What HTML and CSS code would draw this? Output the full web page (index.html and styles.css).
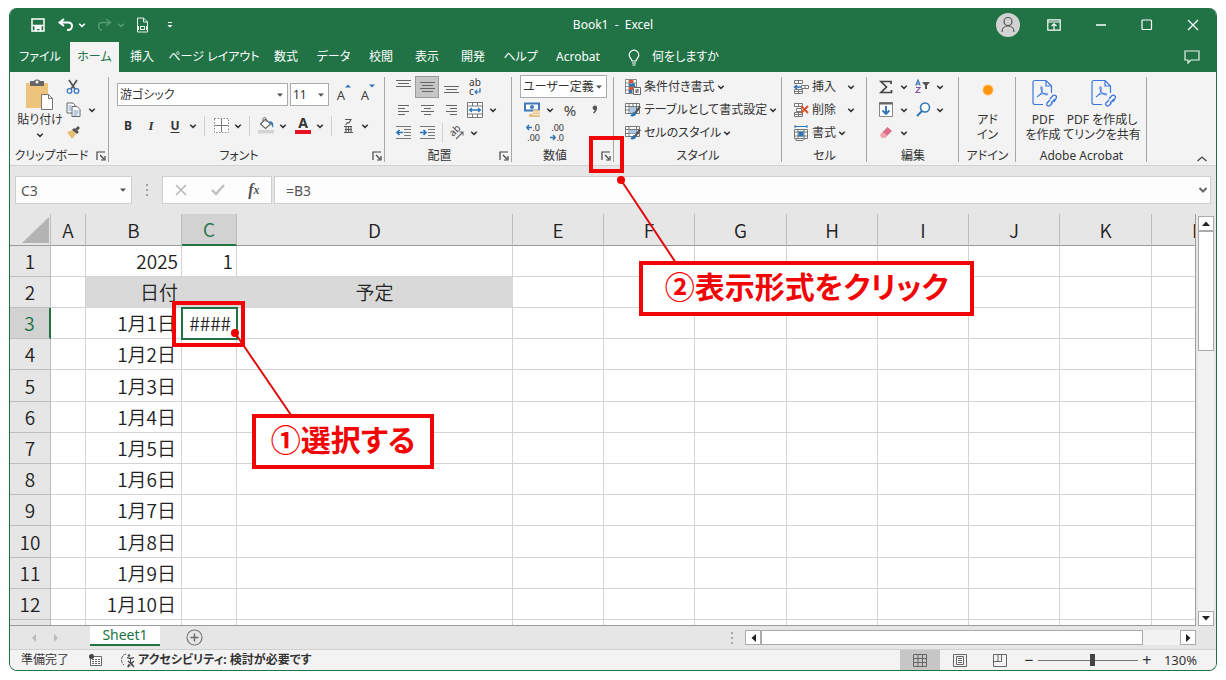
FILE: index.html
```html
<!DOCTYPE html>
<html lang="ja">
<head>
<meta charset="utf-8">
<title>Book1 - Excel</title>
<link rel="stylesheet" href="styles.css">
</head>
<body>
<svg class="defs" width="0" height="0" aria-hidden="true">
  <symbol id="chev" viewBox="0 0 12 12"><path d="M3.2 4.8 6 7.4 8.8 4.8" fill="none" stroke="currentColor" stroke-width="1.5"/></symbol>
  <symbol id="caret" viewBox="0 0 12 12"><path d="M3 4.5h6L6 7.7z" fill="currentColor"/></symbol>
  <symbol id="launch" viewBox="0 0 12 12"><path d="M2 10V2h8M5 5l4 4M10 6v4H6" fill="none" stroke="#444" stroke-width="1.2"/></symbol>
</svg>

<main class="window">
  <header class="titlebar">
    <div class="quick">
      <button class="tb" aria-label="上書き保存"><svg width="14" height="14" viewBox="0 0 14 14"><path d="M1 1h12v12H1z" fill="none" stroke="#fff" stroke-width="1.500"/><path d="M1 7.500h12" stroke="#fff" stroke-width="1.500"/><path d="M3.500 8h7v5.500h-2V11H6v2.500H3.500z" fill="#fff"/></svg></button>
      <button class="tb undo" aria-label="元に戻す"><svg width="16" height="14" viewBox="0 0 16 14"><path d="M6 1 1.500 4.500 6 8M2 4.500h8c3 0 4 1.500 4 3.500s-1.500 4-4 4H9" fill="none" stroke="#fff" stroke-width="2"/></svg><svg class="chev"><use href="#chev"/></svg></button>
      <button class="tb redo" aria-label="やり直し" disabled><svg width="16" height="14" viewBox="0 0 16 14"><path d="M9 1l4.500 3.500L9 8M13 4.500H6c-3 0-4.500 1.500-4.500 3.500S3 12 5 12" fill="none" stroke="#549a70" stroke-width="1.500"/></svg><svg class="chev"><use href="#chev"/></svg></button>
      <button class="tb" aria-label="印刷プレビュー"><svg width="13" height="16" viewBox="0 0 13 16"><path d="M1.500 9V1h6l4 4v4M7.500 1v4h4M1.500 13v2h10v-2" fill="none" stroke="#e4f0e8"/><path d="M1 9h2v4H1zM10 9h2v4h-2z" fill="#e4f0e8"/><rect x="4.500" y="9.500" width="4" height="3" fill="none" stroke="#e4f0e8"/></svg></button>
      <button class="tb more" aria-label="クイック アクセスのカスタマイズ"><svg width="8" height="8" viewBox="0 0 8 8"><path d="M2 1.500h4" stroke="#fff"/><path d="M1.500 4h5L4 6.500z" fill="#fff"/></svg></button>
    </div>
    <h1 class="title">Book1&nbsp; -&nbsp; Excel</h1>
    <div class="sys">
      <button class="avatar" aria-label="アカウント"><svg width="24" height="24" viewBox="0 0 24 24"><circle cx="12" cy="12" r="12" fill="#d2d2d2"/><circle cx="12" cy="8.500" r="4" fill="none" stroke="#555" stroke-width="1.200"/><path d="M6 19c0-8 12-8 12 0" fill="none" stroke="#555" stroke-width="1.200"/></svg></button>
      <button class="tb" aria-label="リボンの表示オプション"><svg width="14" height="12" viewBox="0 0 14 12"><path d="M.8.8h12.400v10.400H.8zM1 3h12M7 11V5M4.500 7 7 4.800 9.500 7" fill="none" stroke="#fff" stroke-width="1.200"/></svg></button>
      <button class="tb" aria-label="最小化"><svg width="12" height="12" viewBox="0 0 12 12"><path d="M1 6h10" stroke="#fff" stroke-width="1.300"/></svg></button>
      <button class="tb" aria-label="最大化"><svg width="12" height="12" viewBox="0 0 12 12"><rect x="1" y="1" width="9.500" height="9.500" rx="1" fill="none" stroke="#fff" stroke-width="1.200"/></svg></button>
      <button class="tb" aria-label="閉じる"><svg width="12" height="12" viewBox="0 0 12 12"><path d="m1 1 10 10M11 1 1 11" stroke="#fff" stroke-width="1.300"/></svg></button>
    </div>
  </header>

  <nav class="tabs">
    <button class="tab t-file">ファイル</button>
    <button class="tab t-home">ホーム</button>
    <button class="tab">挿入</button>
    <button class="tab t-page">ページ レイアウト</button>
    <button class="tab">数式</button>
    <button class="tab t-home">データ</button>
    <button class="tab">校閲</button>
    <button class="tab">表示</button>
    <button class="tab">開発</button>
    <button class="tab t-home">ヘルプ</button>
    <button class="tab t-acro">Acrobat</button>
    <button class="tell"><svg width="12" height="17" viewBox="0 0 12 17"><path d="M4 12c0-2-2.800-3-2.800-6a4.800 4.800 0 0 1 9.600 0c0 3-2.800 4-2.800 6zM4 14h4M4.500 16h3" fill="none" stroke="#fff" stroke-width="1.200"/></svg>何をしますか</button>
    <button class="comment" aria-label="コメント"><svg width="16" height="14" viewBox="0 0 16 14"><path d="M1 1h14v9H7l-3 3v-3H1z" fill="none" stroke="#e8f3ec" stroke-width="1.200"/></svg></button>
  </nav>

  <section class="ribbon" aria-label="ホーム">
    <div class="group g-clip">
      <div class="body clip">
        <button class="paste"><svg width="30" height="32" viewBox="0 0 30 32"><path d="M1 4h22v25H1z" fill="#ecc47c"/><path d="M5 2h4c1-2 5-2 6 0h4v5H5z" fill="#666"/><circle cx="12" cy="3" r="1.500" fill="#f3f3f3"/><path d="M16.500 15.500h7l4 4v11h-11z" fill="#fff" stroke="#777"/><path d="M23.500 15.500v4h4" fill="none" stroke="#777"/></svg><span>貼り付け</span><svg class="chev"><use href="#chev"/></svg></button>
        <div class="col">
          <button class="ic" aria-label="切り取り"><svg width="14" height="15" viewBox="0 0 14 15"><path d="m3 1 6 9M11 1l-6 9" stroke="#555" stroke-width="1.700"/><circle cx="3.500" cy="12" r="2.300" fill="none" stroke="#3f78c4" stroke-width="1.300"/><circle cx="10.500" cy="12" r="2.300" fill="none" stroke="#3f78c4" stroke-width="1.300"/></svg></button>
          <div class="line"><button class="ic" aria-label="コピー"><svg width="15" height="15" viewBox="0 0 15 15"><path d="M1 1h6l2 2v8H1z" fill="#fff" stroke="#666"/><path d="M6 4.500h5l3 3v7H6z" fill="#fff" stroke="#666"/><path d="M2.500 4h3M2.500 6h3M2.500 8h3M7.500 9h5M7.500 11h5M7.500 13h4" stroke="#5b8fd0" stroke-width=".9"/></svg></button><button class="dd dd-wide" aria-label="コピーのオプション"><svg class="chev"><use href="#chev"/></svg></button></div>
          <button class="ic" aria-label="書式のコピー"><svg width="15" height="14" viewBox="0 0 15 14"><path d="m1 6 5-2 4 4-4 5z" fill="#e9bd70"/><path d="m6 4 2-2 5 4-2 2zM9 3l3-3 2 2-3 3z" fill="#555"/></svg></button>
        </div>
      </div>
      <footer class="cap"><span>クリップボード</span><button class="launch" aria-label="クリップボードの詳細"><svg class="chev"><use href="#launch"/></svg></button></footer>
    </div>

    <div class="group g-font">
      <div class="body font">
        <div class="line fontrow">
          <label class="combo c-name"><select aria-label="フォント名"><option>游ゴシック</option></select><svg class="chev"><use href="#caret"/></svg></label>
          <label class="combo c-size"><select aria-label="フォント サイズ"><option>11</option></select><svg class="chev"><use href="#caret"/></svg></label>
          <button class="ic grow" aria-label="フォント サイズの拡大"><span>A</span><svg width="6" height="4" viewBox="0 0 6 4"><path d="M0 3.500 3 .5l3 3z" fill="#2e75b6"/></svg></button>
          <button class="ic grow" aria-label="フォント サイズの縮小"><span>A</span><svg width="6" height="4" viewBox="0 0 6 4"><path d="M0 .5h6l-3 3z" fill="#2e75b6"/></svg></button>
        </div>
        <div class="line">
          <button class="ic bold">B</button><button class="ic ital">I</button><button class="ic under">U</button><button class="dd" aria-label="下線の種類"><svg class="chev"><use href="#chev"/></svg></button>
          <i class="sep"></i>
          <button class="ic" aria-label="罫線"><svg width="15" height="15" viewBox="0 0 15 15"><path d="M.5.500h14v14H.5z" fill="#fff" stroke="#888" stroke-dasharray="1.500 1.500"/><path d="M7.500 1v13M1 7.500h13" stroke="#777"/></svg></button><button class="dd" aria-label="罫線の種類"><svg class="chev"><use href="#chev"/></svg></button>
          <i class="sep"></i>
          <button class="ic" aria-label="塗りつぶしの色"><svg width="17" height="17" viewBox="0 0 17 17"><path d="m2.500 7 5-5 5 5-5 4.500z" fill="#fff" stroke="#666" stroke-width="1.200"/><path d="M5 5V2c0-2 3-2 3 0v3" fill="none" stroke="#666"/><path d="M11 4c4 0 5 3 4 7l-2-4z" fill="#2e75b6"/><path d="M0 13h16v3.500H0z" fill="#d4d4d4"/></svg></button><button class="dd" aria-label="塗りつぶしの色の選択"><svg class="chev"><use href="#chev"/></svg></button>
          <button class="ic color" aria-label="フォントの色"><span>A</span></button><button class="dd" aria-label="フォントの色の選択"><svg class="chev"><use href="#chev"/></svg></button>
          <i class="sep"></i>
          <button class="ic" aria-label="ふりがな"><svg width="10" height="16" viewBox="0 0 10 16"><path d="M2 1.500h6L6 5H4M5 4 2.500 7M1 8.500h8M1 14.500h9M2 11.500h7M3 8v6M5.500 8v6M8 8v6" fill="none" stroke="#555" stroke-width="1.100"/></svg></button><button class="dd" aria-label="ふりがなのオプション"><svg class="chev"><use href="#chev"/></svg></button>
        </div>
      </div>
      <footer class="cap"><span>フォント</span><button class="launch" aria-label="フォントの詳細"><svg class="chev"><use href="#launch"/></svg></button></footer>
    </div>

    <div class="group g-align">
      <div class="body">
        <div class="line">
          <button class="ic w24" aria-label="上揃え"><svg width="15" height="16" viewBox="0 0 15 16"><path d="M0 1.500h15M2 4.500h11M0 7.500h15" stroke="#666"/></svg></button>
          <button class="ic w24 on" aria-label="上下中央揃え"><svg width="15" height="16" viewBox="0 0 15 16"><path d="M0 3.500h15M2 6.500h11M0 9.500h15M2 12.500h11" stroke="#666"/></svg></button>
          <button class="ic w24" aria-label="下揃え"><svg width="15" height="16" viewBox="0 0 15 16"><path d="M0 7.500h15M2 10.500h11M0 13.500h15" stroke="#666"/></svg></button>
          <button class="ic w24 wrap" aria-label="折り返して全体を表示する"><span>ab</span><span>c<svg width="7" height="7" viewBox="0 0 7 7"><path d="M6 0v4H1M3 2 1 4l2 2" fill="none" stroke="#2e75b6" stroke-width="1.200"/></svg></span></button>
        </div>
        <div class="line">
          <button class="ic w24" aria-label="左揃え"><svg width="13" height="13" viewBox="0 0 13 13"><path d="M1 2.500h11M1 5.500h7M1 8.500h11M1 11.500h7" stroke="#666"/></svg></button>
          <button class="ic w24" aria-label="中央揃え"><svg width="13" height="13" viewBox="0 0 13 13"><path d="M0 2.500h13M3 5.500h7M0 8.500h13M3 11.500h7" stroke="#666"/></svg></button>
          <button class="ic w24" aria-label="右揃え"><svg width="13" height="13" viewBox="0 0 13 13"><path d="M1 2.500h11M5 5.500h7M1 8.500h11M5 11.500h7" stroke="#666"/></svg></button>
          <button class="ic w24" aria-label="セルを結合して中央揃え"><svg width="16" height="16" viewBox="0 0 16 16"><path d="M.5.500h15v15H.5zM.5 4h15M.5 12h15M5.500.500V4M10.500.500V4M5.500 12v3.500M10.500 12v3.500" fill="#fff" stroke="#777"/><path d="M2.500 8h11M5 6 2.500 8 5 10M11 6l2.500 2L11 10" fill="none" stroke="#2e75b6" stroke-width="1.300"/></svg></button><button class="dd" aria-label="結合のオプション"><svg class="chev"><use href="#chev"/></svg></button>
        </div>
        <div class="line">
          <button class="ic w24" aria-label="インデントを減らす"><svg width="15" height="13" viewBox="0 0 15 13"><path d="M0 .5h15M8 3.500h7M8 6.500h7M8 9.500h7M0 12.500h15" stroke="#777"/><path d="M7 6.500H1M3.500 4 1 6.500 3.500 9" fill="none" stroke="#2e75b6" stroke-width="1.700"/></svg></button>
          <button class="ic w24" aria-label="インデントを増やす"><svg width="15" height="13" viewBox="0 0 15 13"><path d="M0 .5h15M8 3.500h7M8 6.500h7M8 9.500h7M0 12.500h15" stroke="#777"/><path d="M0 6.500h6M3.500 4 6 6.500 3.500 9" fill="none" stroke="#2e75b6" stroke-width="1.700"/></svg></button>
          <i class="sep tight"></i>
          <button class="ic" aria-label="方向"><svg width="16" height="15" viewBox="0 0 16 15"><text class="abtext" transform="translate(4 12) rotate(-45)">ab</text><path d="m7 14 7-7M10.500 7H14v3.500" fill="none" stroke="#666" stroke-width="1.100"/></svg></button><button class="dd" aria-label="方向のオプション"><svg class="chev"><use href="#chev"/></svg></button>
        </div>
      </div>
      <footer class="cap"><span>配置</span><button class="launch" aria-label="配置の詳細"><svg class="chev"><use href="#launch"/></svg></button></footer>
    </div>

    <div class="group g-num">
      <div class="body">
        <label class="combo c-fmt"><select aria-label="数値の書式"><option>ユーザー定義</option></select><svg class="chev"><use href="#caret"/></svg></label>
        <div class="line">
          <button class="ic w24" aria-label="通貨表示形式"><svg width="17" height="16" viewBox="0 0 17 16"><path d="M1 1.500h14v7H1z" fill="#fff" stroke="#3d79b8" stroke-width="2"/><circle cx="8" cy="5" r="2" fill="#3d79b8"/><path d="M9 8h7v7H9zM5 12h5v3H5z" fill="#eac184"/><path d="M9 10h7M9 12.500h7" stroke="#fff" stroke-width=".8"/></svg></button><button class="dd" aria-label="通貨の選択"><svg class="chev"><use href="#chev"/></svg></button>
          <button class="ic pct" aria-label="パーセント スタイル">%</button>
          <button class="ic" aria-label="桁区切りスタイル"><svg width="6" height="9" viewBox="0 0 6 9"><path d="M3 .5c3 0 3 5-1 8l-1-.7C2 7 3 5.500 2.500 5 0 5 0 .5 3 .5z" fill="#555"/></svg></button>
        </div>
        <div class="line">
          <button class="ic w24 dec" aria-label="小数点以下の表示桁数を増やす"><span><svg width="6" height="7" viewBox="0 0 6 7"><path d="M6 3.500H1M3 1 .8 3.500 3 6" fill="none" stroke="#2e75b6" stroke-width="1.500"/></svg>.0</span><span>.00</span></button>
          <button class="ic w24 dec" aria-label="小数点以下の表示桁数を減らす"><span>.00</span><span><svg width="6" height="7" viewBox="0 0 6 7"><path d="M0 3.500h5M3 1l2.200 2.500L3 6" fill="none" stroke="#2e75b6" stroke-width="1.500"/></svg>.0</span></button>
        </div>
      </div>
      <footer class="cap"><span>数値</span><button class="launch" aria-label="表示形式"><svg class="chev"><use href="#launch"/></svg></button></footer>
    </div>

    <div class="group g-style">
      <div class="body">
        <button class="cmd"><svg width="16" height="16" viewBox="0 0 16 16"><path d="M.5.500h11v14H.5zM.5 4h11M.5 7.500h11M.5 11h11M4 .5v14M8 .5v14" fill="#fff" stroke="#888"/><path d="M4 1h4v3H4zM4 8h4v3H4z" fill="#d9532c"/><path d="M4 4.500h6v3H4zM4 11h3v3H4z" fill="#2e75b6"/><path d="M8.500 8.500h7v7h-7z" fill="#fff" stroke="#666"/><path d="M10 11h4M10 13h4M13 10l-2 4" stroke="#444" stroke-width=".8"/></svg>条件付き書式<svg class="chev"><use href="#chev"/></svg></button>
        <button class="cmd"><svg width="16" height="15" viewBox="0 0 16 15"><path d="M.5 1.500h14v10H.5zM.5 4.500h14M.5 8h14M4 1.500v10M8 1.500v10M11.500 1.500v10" fill="#fff" stroke="#777"/><path d="M5 5h6v6H5z" fill="#a9c8e8"/><path d="m14 4 2 1-5 7-2-1z" fill="#555"/><path d="M9 10c-3 1-2 3-4 4 3 1 6 0 6-2z" fill="#2e75b6"/></svg>テーブルとして書式設定<svg class="chev"><use href="#chev"/></svg></button>
        <button class="cmd"><svg width="16" height="15" viewBox="0 0 16 15"><path d="M.5 1.500h14v10H.5zM.5 4.500h14M.5 8.500h14M4 1.500v10M11.500 1.500v10" fill="#fff" stroke="#777"/><path d="M4.500 5h7v3.500h-7z" fill="#a9c8e8"/><path d="m14 4 2 1-5 7-2-1z" fill="#555"/><path d="M9 10c-3 1-2 3-4 4 3 1 6 0 6-2z" fill="#2e75b6"/></svg>セルのスタイル<svg class="chev"><use href="#chev"/></svg></button>
      </div>
      <footer class="cap"><span>スタイル</span></footer>
    </div>

    <div class="group g-cell">
      <div class="body">
        <button class="cmd"><svg width="16" height="16" viewBox="0 0 16 16"><path d="M1.500 1.500h8v3h-8zM5.500 1.500v3M1.500 10.500h8v4h-8zM5.500 10.500v4M1.500 12.500h8M8.500 6.500h7v3h-7zM12 6.500v3" fill="#fff" stroke="#777"/><path d="M8 8H1.500M4 6 1.500 8 4 10" fill="none" stroke="#2e75b6" stroke-width="1.400"/></svg>挿入<svg class="chev push"><use href="#chev"/></svg></button>
        <button class="cmd"><svg width="16" height="16" viewBox="0 0 16 16"><path d="M1.500 1.500h8v3h-8zM5.500 1.500v3M3.500 6.500h5v3h-5zM1.500 10.500h8v4h-8zM5.500 10.500v4M1.500 12.500h8" fill="#fff" stroke="#777"/><path d="m8 4 7 7M15 4l-7 7" stroke="#d8502c" stroke-width="1.900"/></svg>削除<svg class="chev push"><use href="#chev"/></svg></button>
        <button class="cmd"><svg width="16" height="16" viewBox="0 0 16 16"><path d="M1.500 4.500h13v9h-13zM1.500 7h13M1.500 11h13M5 4.500v9M11 4.500v9" fill="#fff" stroke="#777"/><path d="M5.500 6.500h5v5h-5z" fill="#2e75b6"/><path d="M2 1.500h12M2 0v3M14 0v3" stroke="#2e75b6"/><path d="M3 13.500v2h7l2-2" fill="none" stroke="#777"/></svg>書式<svg class="chev"><use href="#chev"/></svg></button>
      </div>
      <footer class="cap"><span>セル</span></footer>
    </div>

    <div class="group g-edit">
      <div class="body">
        <div class="line"><button class="ic" aria-label="合計"><svg width="14" height="14" viewBox="0 0 14 14"><path d="M12 4V1.500H2L7.500 7 2 12.500h10.500V10" fill="none" stroke="#444" stroke-width="1.700"/></svg></button><button class="dd dd-mid" aria-label="合計のオプション"><svg class="chev"><use href="#chev"/></svg></button>
          <button class="ic sort" aria-label="並べ替えとフィルター"><svg width="16" height="15" viewBox="0 0 16 15"><path d="M.8 6.500 3 1l2.200 5.500M1.500 5h3" fill="none" stroke="#2e75b6" stroke-width="1.200"/><path d="M1 8.500h4l-4 5h4.500" fill="none" stroke="#8a4ba8" stroke-width="1.200"/><path d="M7 3h8l-3 3.500V10h-2V6.500z" fill="#555"/></svg></button><button class="dd" aria-label="並べ替えのオプション"><svg class="chev"><use href="#chev"/></svg></button></div>
        <div class="line"><button class="ic" aria-label="フィル"><svg width="14" height="15" viewBox="0 0 14 15"><path d="M.5.500h13v14H.5z" fill="#fff" stroke="#888"/><path d="M0 1.500h14" stroke="#666" stroke-width="2"/><path d="M7 4v8M3.500 8.500 7 12l3.500-3.500" fill="none" stroke="#2e75b6" stroke-width="1.900"/></svg></button><button class="dd dd-mid" aria-label="フィルのオプション"><svg class="chev"><use href="#chev"/></svg></button>
          <button class="ic sort" aria-label="検索と選択"><svg width="15" height="15" viewBox="0 0 15 15"><circle cx="9" cy="5.500" r="4.500" fill="#fff" stroke="#2e75b6" stroke-width="1.500"/><path d="m6 9-5 5" stroke="#2e75b6" stroke-width="2"/></svg></button><button class="dd" aria-label="検索のオプション"><svg class="chev"><use href="#chev"/></svg></button></div>
        <div class="line"><button class="ic" aria-label="クリア"><svg width="14" height="13" viewBox="0 0 14 13"><path d="m8.500 1 4.500 4-5 5-4.500-4z" fill="#dd7084"/><path d="M3.500 6 8 10l-2 2H3L.8 9z" fill="#f0a0ae"/></svg></button><button class="dd dd-mid" aria-label="クリアのオプション"><svg class="chev"><use href="#chev"/></svg></button></div>
      </div>
      <footer class="cap"><span>編集</span></footer>
    </div>

    <div class="group g-add">
      <div class="body"><button class="big"><svg width="28" height="32" viewBox="0 0 28 32"><circle cx="14" cy="14" r="6" fill="#ffdcae"/><circle cx="14" cy="14" r="4.800" fill="#fd960c"/></svg><span>アド<br>イン</span></button></div>
      <footer class="cap"><span>アドイン</span></footer>
    </div>

    <div class="group g-acro">
      <div class="body two">
        <button class="big b-one"><svg width="28" height="32" viewBox="0 0 28 32"><path d="M14 28.500H6c-1.500 0-2-1-2-2v-20c0-1 .5-2 2-2h11l5.500 5.500v7M17 4.500V10h5.500" fill="none" stroke="#3b76e0" stroke-width="1.200"/><path d="M8 21c4-2 6-7 5-10-1-1-1.500 0-1 2 1 3 3 6 6 6 2-1 0-2-3-1.500S9 19 8 21" fill="none" stroke="#3b76e0"/><path d="m21 24-3 3c-1.500 2 1 4 3 2.500l2.500-2.500M22 27l4-4M21 23l2.500-3c2-2 5 0 3.500 2.500L25 26" fill="none" stroke="#3b76e0" stroke-width="1.300"/></svg><span>PDF<br>を作成</span></button>
        <button class="big b-two"><svg width="28" height="32" viewBox="0 0 28 32"><path d="M14 28.500H6c-1.500 0-2-1-2-2v-20c0-1 .5-2 2-2h11l5.500 5.500v7M17 4.500V10h5.500" fill="none" stroke="#3b76e0" stroke-width="1.200"/><path d="M8 21c4-2 6-7 5-10-1-1-1.500 0-1 2 1 3 3 6 6 6 2-1 0-2-3-1.500S9 19 8 21" fill="none" stroke="#3b76e0"/><path d="m21 24-3 3c-1.500 2 1 4 3 2.500l2.500-2.500M22 27l4-4M21 23l2.500-3c2-2 5 0 3.500 2.500L25 26" fill="none" stroke="#3b76e0" stroke-width="1.300"/></svg><span>PDF を作成し<br>てリンクを共有</span></button>
      </div>
      <footer class="cap"><span>Adobe Acrobat</span></footer>
    </div>
    <button class="collapse" aria-label="リボンを折りたたむ"><svg width="12" height="8" viewBox="0 0 12 8"><path d="M1.500 6 6 2l4.500 4" fill="none" stroke="#444" stroke-width="1.300"/></svg></button>
  </section>

  <section class="formula" aria-label="数式バー">
    <label class="namebox"><input type="text" value="C3" aria-label="名前ボックス"><svg class="chev"><use href="#caret"/></svg></label>
    <svg class="dots" width="4" height="12" viewBox="0 0 4 12"><path d="M1 1h2M1 6h2M1 11h2" stroke="#a0a0a0" stroke-width="2"/></svg>
    <div class="fx">
      <button aria-label="キャンセル"><svg width="14" height="12" viewBox="0 0 14 12"><path d="m2 1 10 10M12 1 2 11" stroke="#b9b9b9" stroke-width="1.600"/></svg></button>
      <button aria-label="入力"><svg width="14" height="12" viewBox="0 0 14 12"><path d="m1 6 4 4 8-9" fill="none" stroke="#c0c0c0" stroke-width="2.400"/></svg></button>
      <button class="fn" aria-label="関数の挿入">f<small>x</small></button>
    </div>
    <label class="fbar"><input type="text" value="=B3" aria-label="数式"><svg width="12" height="12" viewBox="0 0 12 12"><path d="M2.500 4 6 7.500 9.500 4" fill="none" stroke="#666" stroke-width="2"/></svg></label>
  </section>

  <section class="sheet">
    <div class="view">
      <table class="grid">
        <colgroup><col class="c-h"><col class="c-a"><col class="c-b"><col class="c-c"><col class="c-d"><col class="c-n"><col class="c-n"><col class="c-m"><col class="c-n"><col class="c-n"><col class="c-n"><col class="c-m"><col class="c-n"></colgroup>
        <thead><tr><th class="corner"><svg width="27" height="26" viewBox="0 0 27 26"><path d="M27 0v26H0z" fill="#b3b3b3"/></svg></th><th>A</th><th>B</th><th class="sel">C</th><th>D</th><th>E</th><th>F</th><th>G</th><th>H</th><th>I</th><th>J</th><th>K</th><th>L</th></tr></thead>
        <tbody>
          <tr><th>1</th><td></td><td class="num">2025</td><td class="num">1</td><td></td><td></td><td></td><td></td><td></td><td></td><td></td><td></td><td></td></tr>
          <tr><th>2</th><td></td><td class="num fill">日付</td><td class="fill"></td><td class="mid fill">予定</td><td></td><td></td><td></td><td></td><td></td><td></td><td></td><td></td></tr>
          <tr><th class="sel">3</th><td></td><td class="date">1月1日</td><td class="date active">####</td><td></td><td></td><td></td><td></td><td></td><td></td><td></td><td></td><td></td></tr>
          <tr><th>4</th><td></td><td class="date">1月2日</td><td></td><td></td><td></td><td></td><td></td><td></td><td></td><td></td><td></td><td></td></tr>
          <tr><th>5</th><td></td><td class="date">1月3日</td><td></td><td></td><td></td><td></td><td></td><td></td><td></td><td></td><td></td><td></td></tr>
          <tr><th>6</th><td></td><td class="date">1月4日</td><td></td><td></td><td></td><td></td><td></td><td></td><td></td><td></td><td></td><td></td></tr>
          <tr><th>7</th><td></td><td class="date">1月5日</td><td></td><td></td><td></td><td></td><td></td><td></td><td></td><td></td><td></td><td></td></tr>
          <tr><th>8</th><td></td><td class="date">1月6日</td><td></td><td></td><td></td><td></td><td></td><td></td><td></td><td></td><td></td><td></td></tr>
          <tr><th>9</th><td></td><td class="date">1月7日</td><td></td><td></td><td></td><td></td><td></td><td></td><td></td><td></td><td></td><td></td></tr>
          <tr><th>10</th><td></td><td class="date">1月8日</td><td></td><td></td><td></td><td></td><td></td><td></td><td></td><td></td><td></td><td></td></tr>
          <tr><th>11</th><td></td><td class="date">1月9日</td><td></td><td></td><td></td><td></td><td></td><td></td><td></td><td></td><td></td><td></td></tr>
          <tr><th>12</th><td></td><td class="date">1月10日</td><td></td><td></td><td></td><td></td><td></td><td></td><td></td><td></td><td></td><td></td></tr>
          <tr class="cut"><th></th><td></td><td></td><td></td><td></td><td></td><td></td><td></td><td></td><td></td><td></td><td></td><td></td></tr>
        </tbody>
      </table>
    </div>
    <div class="vscroll">
      <button class="arrow" aria-label="上へ"><svg width="8" height="5" viewBox="0 0 8 5"><path d="m0 5 4-4.500L8 5z" fill="#222"/></svg></button>
      <div class="thumb"></div>
      <button class="arrow down" aria-label="下へ"><svg width="8" height="5" viewBox="0 0 8 5"><path d="m0 0 4 4.500L8 0z" fill="#222"/></svg></button>
    </div>
  </section>

  <section class="sheettabs">
    <div class="nav"><svg width="6" height="8" viewBox="0 0 6 8"><path d="M5 0v8L1 4z" fill="#bbb"/></svg><svg width="6" height="8" viewBox="0 0 6 8"><path d="M1 0v8l4-4z" fill="#bbb"/></svg></div>
    <button class="stab">Sheet1</button>
    <button class="plus" aria-label="新しいシート"><svg width="17" height="17" viewBox="0 0 17 17"><circle cx="8.500" cy="8.500" r="7.500" fill="none" stroke="#7a7a7a" stroke-width="1.200"/><path d="M8.500 4.500v8M4.500 8.500h8" stroke="#666" stroke-width="1.400"/></svg></button>
    <svg class="hdots" width="4" height="12" viewBox="0 0 4 12"><path d="M1 1h2M1 6h2M1 11h2" stroke="#a8a8a8" stroke-width="2"/></svg>
    <div class="hscroll">
      <button class="arrow" aria-label="左へ"><svg width="5" height="8" viewBox="0 0 5 8"><path d="M5 0v8L.5 4z" fill="#222"/></svg></button>
      <div class="thumb"></div>
      <button class="arrow right" aria-label="右へ"><svg width="5" height="8" viewBox="0 0 5 8"><path d="M0 0v8l4.500-4z" fill="#222"/></svg></button>
    </div>
  </section>

  <footer class="status">
    <span class="ready">準備完了</span>
    <svg class="macro" width="13" height="12" viewBox="0 0 13 12"><path d="M1.500 2.500h11v9h-11z" fill="#fff" stroke="#666"/><path d="M4 2.500h9M3 5.500h8M3 7.500h8M3 9.500h8" stroke="#666" stroke-dasharray="2 1"/><circle cx="2.500" cy="2.500" r="2.500" fill="#444"/></svg>
    <button class="acc"><svg width="16" height="15" viewBox="0 0 16 15"><path d="M6 1C1 2 0 9 4 12" fill="none" stroke="#555" stroke-dasharray="3 1"/><path d="M7 4.500c2 1 5 1 7 0M10.500 5v4l-3 5M10.500 9l3 4M8 8l6 6M14 8l-6 6" fill="none" stroke="#444" stroke-width="1.100"/><circle cx="9" cy="2.500" r="1.300" fill="#555"/></svg>アクセシビリティ: 検討が必要です</button>
    <div class="modes">
      <button class="mode on" aria-label="標準"><svg width="14" height="13" viewBox="0 0 14 13"><path d="M.5.500h13v12H.5zM.5 4.500h13M.5 8.500h13M5 .5v12M9.500.500v12" fill="none" stroke="#666"/></svg></button>
      <button class="mode" aria-label="ページ レイアウト"><svg width="14" height="13" viewBox="0 0 14 13"><path d="M.5.500h13v12H.5zM3.500 2.500h7v8h-7zM5 4.500h4M5 6.500h4M5 8.500h4" fill="none" stroke="#666"/></svg></button>
      <button class="mode" aria-label="改ページ プレビュー"><svg width="14" height="13" viewBox="0 0 14 13"><path d="M.5.500h13v12H.5zM.5 7.500h8v-7M5 .5v7" fill="none" stroke="#666"/></svg></button>
    </div>
    <button class="zbtn" aria-label="縮小">−</button>
    <input class="zoom" type="range" min="10" max="260" value="147" aria-label="ズーム">
    <button class="zbtn" aria-label="拡大">+</button>
    <span class="pct130">130%</span>
  </footer>
</main>

<div class="notes">
  <svg class="leaders" width="400" height="240" viewBox="0 0 400 240"><path d="m5 158 56 82M391 5l55 83" fill="none" stroke="#e00b0b" stroke-width="2"/><circle cx="5" cy="158" r="4" fill="#f00000"/><circle cx="391" cy="5" r="4" fill="#f00000"/></svg>
  <div class="ring r-launch"></div>
  <div class="ring r-cell"></div>
  <p class="note n-one">①選択する</p>
  <p class="note n-two">②表示形式をクリック</p>
</div>
</body>
</html>
```
FILE: styles.css
```css
* { box-sizing: border-box; }
body {
  position: relative;
  margin: 0;
  padding: 8px 9px 10px;
  background: #fff;
  color: #333;
  font: 12px/16px "Noto Sans", "Noto Sans CJK JP", sans-serif;
  font-feature-settings: "palt";
}
button, input, select { margin: 0; padding: 0; border: 0; background: none; color: inherit; font: inherit; font-feature-settings: inherit; }
button { display: flex; align-items: center; justify-content: center; white-space: nowrap; }
svg { display: block; flex: none; overflow: visible; }
.defs { position: absolute; }
.chev { width: 12px; height: 12px; }

.window { display: flex; flex-direction: column; border: solid #217346; border-width: 0 1px 1px; border-radius: 8px; overflow: hidden; background: #e6e6e6; }

/* title bar */
.titlebar { display: grid; grid-template-columns: 1fr auto 1fr; align-items: center; height: 34px; background: #217346; color: #fff; }
.quick { display: flex; align-items: center; padding-left: 21px; gap: 13px; }
.undo, .redo { gap: 2px; }
.undo { margin-right: -4px; }
.redo { color: #549a70; }
.quick .redo + .tb { margin-left: -4px; }
.more { margin-left: 4px; }
.title { margin: 0; font-size: 12px; font-weight: 400; line-height: 34px; }
.sys { display: flex; align-items: center; justify-content: flex-end; gap: 34px; padding-right: 17px; }
.avatar { margin-right: -7px; }

/* tabs */
.tabs { display: flex; height: 30px; background: #217346; color: #fff; }
.tab { width: 46px; }
.t-file { width: 60px; }
.t-home { width: 49px; }
.t-page { width: 98px; }
.t-acro { width: 66px; }
.tab:nth-child(2) { background: #f3f3f3; color: #217346; }
.tell { gap: 12px; margin-left: 17px; }
.comment { margin-left: auto; margin-right: 16px; }

/* ribbon */
.ribbon { display: flex; height: 94px; background: #f3f3f3; border-bottom: 1px solid #d2d2d2; }
.group { position: relative; display: flex; flex-direction: column; justify-content: space-between; padding: 3px 0 0 8px; }
.group::after { content: ""; position: absolute; right: 0; top: 5px; bottom: 3px; width: 1px; background: #a6a6a6; }
.g-clip { width: 99px; }
.g-font { width: 276px; }
.g-align { width: 127px; padding-left: 6px; }
.g-num { width: 102px; }
.g-style { width: 168px; }
.g-style .body { padding-left: 3px; }
.g-cell { width: 85px; }
.g-cell .body { padding-left: 3px; }
.g-edit { width: 92px; }
.g-add { width: 57px; padding-left: 0; }
.g-acro { width: 131px; padding-left: 0; }
.body { display: flex; flex-direction: column; }
.line { display: flex; align-items: center; height: 23px; }
.cap { display: grid; grid-template-columns: 1fr 16px; align-items: center; height: 18px; margin-left: -8px; text-align: center; }
.cap span { grid-column: 1; white-space: nowrap; }
.g-style .cap, .g-cell .cap, .g-edit .cap, .g-add .cap, .g-acro .cap { grid-template-columns: 1fr; }
.g-add .cap, .g-acro .cap { margin-left: 0; }
.launch { height: 12px; }
.ic { width: 22px; height: 22px; }
.w24 { width: 24px; }
.on { background: #c6c6c6; box-shadow: inset 0 0 0 1px #9b9b9b; }
.dd { width: 12px; height: 22px; }
.dd-wide { width: 16px; }
.dd-mid { width: 14px; }
.sep { width: 1px; height: 20px; margin: 0 5px; background: #d0d0d0; }
.sep.tight { margin: 0 3px; }

.clip { flex-direction: row; }
.paste { flex-direction: column; width: 44px; height: 72px; justify-content: flex-start; padding-top: 4px; gap: 1px; }
.clip { height: 72px; }
.clip .col > .ic { height: 23px; }

.font { gap: 8px; padding-top: 8px; }
.fontrow { gap: 2px; }
.ital, .under { width: 24px; }
.combo { position: relative; display: block; height: 23px; background: #fff; border: 1px solid #ababab; }
.combo select { width: 100%; height: 100%; appearance: none; padding-left: 2px; color: #333; outline: 0; }
.combo .chev { position: absolute; right: 1px; top: 5px; pointer-events: none; color: #555; }
.c-name { width: 171px; }
.c-size { width: 39px; margin-right: 2px; }
.c-fmt { width: 87px; }
.grow { align-items: flex-start; }
.grow span { font-size: 13px; line-height: 22px; color: #444; }
.bold { font-weight: 700; }
.ital { font: italic 700 13px "Liberation Serif", serif; }
.under { font-weight: 700; text-decoration: underline; text-underline-offset: 2px; }
.color { margin-left: 3px; }
.color span { width: 16px; height: 17px; border-bottom: 4px solid #e81123; font-size: 14px; font-weight: 700; line-height: 12px; }
.wrap, .dec { flex-direction: column; font-size: 10px; line-height: 9px; }
.wrap span, .dec span { display: flex; align-items: center; }
.dec { font-size: 9px; line-height: 10px; align-items: flex-end; padding-right: 4px; }
.abtext { font: 10px "Noto Sans", sans-serif; fill: #444; }
.g-num .pct { width: 28px; font-size: 15px; color: #444; }

.cmd { justify-content: flex-start; height: 23px; }
.cmd > svg:first-child { margin-right: 3px; }
.push { margin-left: 9px; }
.sort { margin-left: 1px; }
.big { flex-direction: column; align-self: center; padding-top: 1px; line-height: 15px; }
.big svg { margin-bottom: 4px; }
.two { flex-direction: row; justify-content: center; gap: 1px; }
.b-one { width: 40px; }
.b-two { width: 76px; }
.collapse { align-self: flex-end; margin: 0 8px 2px auto; }

/* formula bar */
.formula { display: flex; align-items: center; height: 48px; padding: 0 5px; }
.namebox, .fbar, .fx { display: flex; align-items: center; height: 28px; background: #fdfdfd; border: 1px solid #cfcfcf; color: #555; }
.namebox { width: 117px; padding: 0 2px 0 5px; font-size: 14px; }
.namebox input { flex: 1; min-width: 0; height: 26px; outline: 0; }
.dots { margin: 0 13px; }
.fx { width: 110px; justify-content: space-around; }
.fn { font: italic 700 16px "Liberation Serif", serif; }
.fn small { font-size: 12px; }
.fbar { flex: 1; margin-left: 2px; padding: 0 1px 0 11px; font-size: 14px; }
.fbar input { flex: 1; min-width: 0; height: 26px; outline: 0; }

/* worksheet */
.sheet { display: flex; }
.view { flex: 1; min-width: 0; overflow: hidden; border-right: 1px solid #a0a0a0; border-bottom: 1px solid #9b9b9b; }
.grid { width: 1233px; table-layout: fixed; border-collapse: separate; border-spacing: 0; background: #fff; color: #222; font: 350 19px/26px "Noto Sans CJK JP", sans-serif; font-feature-settings: normal; }
.c-h { width: 41px; } .c-a { width: 35px; } .c-b { width: 96px; } .c-c { width: 55px; }
.c-d { width: 276px; } .c-n { width: 91px; } .c-m { width: 92px; }
.grid th, .grid td { height: 31px; padding: 0; border: solid #d4d4d4; border-width: 0 1px 1px 0; white-space: nowrap; }
.grid tbody tr:nth-child(5n) > * { height: 32px; }
.grid th { background: #e6e6e6; border-color: #bdbdbd; font-weight: 350; text-align: center; }
.grid thead th { height: 32px; border-bottom-color: #9b9b9b; }
.grid .corner svg { margin-left: 12px; }
.grid .sel { background: #d2d2d2; color: #217346; }
.grid thead .sel { border-bottom: 2px solid #217346; }
.grid tbody .sel { border-right: 2px solid #217346; }
.grid .num { padding-right: 3px; text-align: right; }
.grid .date { padding-right: 5px; text-align: right; }
.grid .mid { text-align: center; }
.grid .fill { background: #d9d9d9; border-color: #d9d9d9; }
.grid .active { outline: 2px solid #217346; outline-offset: -1px; }
.grid .cut > * { height: 5px; border-bottom: 0; }
.vscroll { display: flex; flex-direction: column; width: 16px; margin: 2px 2px 0; background: #f2f2f2; }
.arrow { flex: none; width: 16px; height: 15px; background: #fff; border: 1px solid #ababab; }
.thumb { background: #fff; border: 1px solid #ababab; }
.vscroll .thumb { height: 120px; }
.down { margin-top: auto; }

/* sheet tabs and status bar */
.sheettabs { display: flex; align-items: center; height: 23px; }
.nav { display: flex; gap: 16px; padding-left: 21px; width: 80px; }
.stab { width: 70px; height: 20px; align-self: flex-start; background: #fff; border-bottom: 2px solid #217346; color: #217346; font-size: 14px; }
.plus { margin-left: 26px; }
.hdots { margin-left: auto; margin-right: 11px; }
.hscroll { display: flex; width: 38%; max-width: 451px; margin-right: 20px; background: #f2f2f2; }
.hscroll .thumb { width: 382px; }
.right { margin-left: auto; }
.status { display: flex; align-items: center; height: 21px; background: #f3f3f3; border-top: 1px solid #d0d0d0; padding-left: 11px; }
.macro { margin: 0 18px 0 20px; }
.acc { font-weight: 700; gap: 2px; }
.modes { display: flex; margin-left: auto; height: 100%; }
.mode { width: 40px; }
.mode.on { box-shadow: none; }
.zbtn { width: 18px; font-size: 16px; line-height: 18px; }
.zoom { appearance: none; width: 100px; height: 18px; background: linear-gradient(#777, #777) center / 100% 1px no-repeat; }
.zoom::-webkit-slider-thumb { appearance: none; width: 5px; height: 12px; background: #444; }
.pct130 { margin: 0 19px 0 8px; font-size: 13px; }

/* annotations laid over the window */
.leaders { position: absolute; left: 230px; top: 175px; }
.ring { position: absolute; border: 4px solid #f20505; }
.r-launch { left: 589px; top: 136px; width: 35px; height: 37px; }
.r-cell { left: 172px; top: 301px; width: 73px; height: 46px; }
.note { position: absolute; margin: 0; background: #fff; border: 4px solid #f20505; color: #f20505; font: 700 30px/40px "Noto Sans CJK JP", sans-serif; font-feature-settings: "palt"; white-space: nowrap; text-align: center; }
.n-one { left: 252px; top: 414px; width: 182px; height: 55px; }
.n-two { left: 639px; top: 261px; width: 335px; height: 55px; }
```
